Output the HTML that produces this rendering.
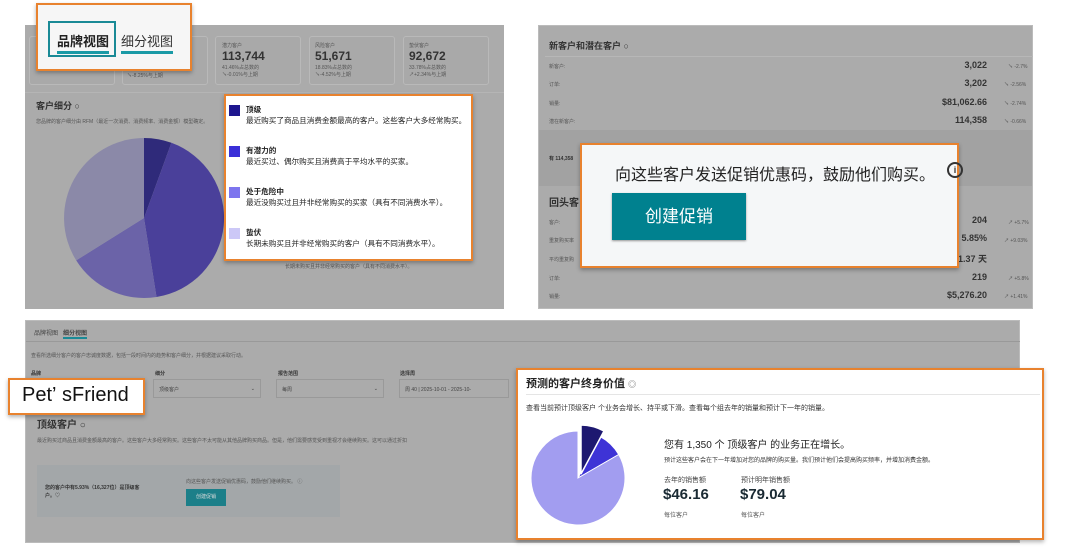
<!DOCTYPE html>
<html><head><meta charset="utf-8"><style>
*{margin:0;padding:0;box-sizing:border-box}
body{width:1080px;height:552px;background:#fff;position:relative;overflow:hidden;font-family:"Liberation Sans","Noto Sans CJK SC",sans-serif;color:#222}
.a{position:absolute;white-space:nowrap}
.g{background:#ababab}
.card{position:absolute;border:1px solid #b9b9b9;border-radius:3px;background:#a9a9a9}
.o{position:absolute;border:2px solid #e8822e;background:#fff;box-shadow:0 2px 4px rgba(0,0,0,.3)}
.s{font-size:5px;color:#555}
.m{color:#333;font-size:9px;font-weight:bold}
</style></head><body>

<!-- Panel 1 -->
<div class="a g" style="left:25px;top:25px;width:479px;height:284px"></div>
<div class="card" style="left:29px;top:36px;width:86px;height:49px"></div>
<div class="card" style="left:122px;top:36px;width:86px;height:49px"></div>
<div class="card" style="left:215px;top:36px;width:86px;height:49px"></div>
<div class="card" style="left:309px;top:36px;width:86px;height:49px"></div>
<div class="card" style="left:403px;top:36px;width:86px;height:49px"></div>
<div class="a s" style="left:222px;top:42px">潜力客户</div>
<div class="a" style="left:222px;top:49px;font-size:12px;font-weight:bold;color:#333">113,744</div>
<div class="a s" style="left:222px;top:64px">41.46%占总数的<br>↘-0.01%与上期</div>
<div class="a s" style="left:315px;top:42px">风险客户</div>
<div class="a" style="left:315px;top:49px;font-size:12px;font-weight:bold;color:#333">51,671</div>
<div class="a s" style="left:315px;top:64px">18.83%占总数的<br>↘-4.52%与上期</div>
<div class="a s" style="left:409px;top:42px">蛰伏客户</div>
<div class="a" style="left:409px;top:49px;font-size:12px;font-weight:bold;color:#333">92,672</div>
<div class="a s" style="left:409px;top:64px">33.78%占总数的<br>↗+2.34%与上期</div>
<div class="a s" style="left:127px;top:72px">↘-8.25%与上期</div>
<div class="a" style="left:25px;top:92px;width:479px;border-top:1px solid #b5b5b5"></div>
<div class="a" style="left:36px;top:99px;font-size:9px;font-weight:bold;color:#333">客户细分 ○</div>
<div class="a s" style="left:36px;top:118px">您品牌的客户细分由 RFM（最近一次消费、消费频率、消费金额）模型确定。</div>
<svg class="a" style="left:0;top:0" width="540" height="310">
<path d="M144 218 L144 138 A80 80 0 0 1 171.4 142.8Z" fill="#2f2a7a"/>
<path d="M144 218 L171.4 142.8 A80 80 0 0 1 156.5 297Z" fill="#4a409a"/>
<path d="M144 218 L156.5 297 A80 80 0 0 1 76.2 260.4Z" fill="#6b63a8"/>
<path d="M144 218 L76.2 260.4 A80 80 0 0 1 144 138Z" fill="#8b89a8"/>
</svg>
<div class="a s" style="left:285px;top:263px">长期未购买且并非经常购买的客户（具有不同消费水平）。</div>

<!-- tab callout -->
<div class="o" style="left:36px;top:3px;width:156px;height:68px;background:#f6f6f6"></div>
<div class="a" style="left:48px;top:21px;width:68px;height:36px;border:2px solid #1a8a96"></div>
<div class="a" style="left:57px;top:31px;font-size:13px;font-weight:bold;color:#222;border-bottom:3px solid #1a9aa6;padding-bottom:1px">品牌视图</div>
<div class="a" style="left:121px;top:31px;font-size:13px;color:#333;border-bottom:3px solid #1a9aa6;padding-bottom:1px">细分视图</div>

<!-- legend callout -->
<div class="o" style="left:224px;top:94px;width:249px;height:167px"></div>
<div class="a" style="left:229px;top:105px;width:11px;height:11px;background:#1e168f"></div>
<div class="a" style="left:229px;top:146px;width:11px;height:11px;background:#3a2fd8"></div>
<div class="a" style="left:229px;top:187px;width:11px;height:11px;background:#7d75ee"></div>
<div class="a" style="left:229px;top:228px;width:11px;height:11px;background:#ccc8f7"></div>
<div class="a" style="left:246px;top:104px;font-size:7.6px;line-height:11px"><b>顶级</b><br>最近购买了商品且消费金额最高的客户。这些客户大多经常购买。</div>
<div class="a" style="left:246px;top:145px;font-size:7.6px;line-height:11px"><b>有潜力的</b><br>最近买过、偶尔购买且消费高于平均水平的买家。</div>
<div class="a" style="left:246px;top:186px;font-size:7.6px;line-height:11px"><b>处于危险中</b><br>最近没购买过且并非经常购买的买家（具有不同消费水平）。</div>
<div class="a" style="left:246px;top:227px;font-size:7.6px;line-height:11px"><b>蛰伏</b><br>长期未购买且并非经常购买的客户（具有不同消费水平）。</div>

<!-- Panel 2 -->
<div class="a g" style="left:538px;top:25px;width:495px;height:284px;border:1px solid #bbb"></div>
<div class="a" style="left:549px;top:39px;font-size:9px;font-weight:bold;color:#333">新客户和潜在客户 ○</div>
<div class="a" style="left:545px;top:56px;width:488px;border-top:1px solid #b7b7b7"></div>
<div class="a s" style="left:549px;top:63px">新客户:</div><div class="a m" style="right:93px;top:60px">3,022</div><div class="a s" style="left:1008px;top:63px">↘ -2.7%</div>
<div class="a s" style="left:549px;top:81px">订单:</div><div class="a m" style="right:93px;top:78px">3,202</div><div class="a s" style="left:1004px;top:81px">↘ -2.56%</div>
<div class="a s" style="left:549px;top:100px">销量:</div><div class="a m" style="right:93px;top:97px">$81,062.66</div><div class="a s" style="left:1004px;top:100px">↘ -2.74%</div>
<div class="a s" style="left:549px;top:118px">潜在新客户:</div><div class="a m" style="right:93px;top:115px">114,358</div><div class="a s" style="left:1004px;top:118px">↘ -0.66%</div>
<div class="a" style="left:539px;top:130px;width:493px;height:56px;background:#a2a2a2"></div>
<div class="a" style="left:549px;top:155px;font-size:5px;font-weight:bold;color:#333">有 114,358</div>
<div class="a" style="left:549px;top:194px;font-size:10px;font-weight:bold;color:#333">回头客</div>
<div class="a s" style="left:549px;top:219px">客户:</div><div class="a m" style="right:93px;top:215px">204</div><div class="a s" style="left:1008px;top:219px">↗ +5.7%</div>
<div class="a s" style="left:549px;top:237px">重复购买率</div><div class="a m" style="right:93px;top:233px">5.85%</div><div class="a s" style="left:1004px;top:237px">↗ +9.03%</div>
<div class="a s" style="left:549px;top:256px">平均重复购</div><div class="a m" style="right:93px;top:252px">1.37 天</div>
<div class="a s" style="left:549px;top:275px">订单:</div><div class="a m" style="right:93px;top:272px">219</div><div class="a s" style="left:1008px;top:275px">↗ +5.8%</div>
<div class="a s" style="left:549px;top:293px">销量:</div><div class="a m" style="right:93px;top:290px">$5,276.20</div><div class="a s" style="left:1004px;top:293px">↗ +1.41%</div>

<div class="o" style="left:580px;top:143px;width:379px;height:125px;background:#f5f7f8"></div>
<div class="a" style="left:615px;top:161px;font-size:16px;color:#222">向这些客户发送促销优惠码，鼓励他们购买。</div>
<div class="a" style="left:947px;top:162px;width:16px;height:16px;border:2px solid #333;border-radius:50%;font-size:9px;font-weight:bold;text-align:center;line-height:12px;color:#333">i</div>
<div class="a" style="left:612px;top:193px;width:134px;height:47px;background:#00818f;box-shadow:0 1px 2px rgba(0,0,0,.4);color:#fff;font-size:17px;text-align:center;line-height:47px">创建促销</div>

<!-- Panel 3 -->
<div class="a g" style="left:25px;top:320px;width:995px;height:223px;border:1px solid #bbb"></div>
<div class="a" style="left:34px;top:328px;font-size:6px;color:#444">品牌视图 &nbsp;&nbsp;<span style="border-bottom:2px solid #1a8a96;font-weight:bold">细分视图</span></div>
<div class="a" style="left:26px;top:341px;width:994px;border-top:1px solid #999"></div>
<div class="a s" style="left:31px;top:352px">查看所选细分客户的客户忠诚度数据，包括一段时间内的趋势和客户细分，并根据建议采取行动。</div>
<div class="a" style="left:31px;top:370px;font-size:5px;font-weight:bold;color:#333">品牌</div>
<div class="a" style="left:155px;top:370px;font-size:5px;font-weight:bold;color:#333">细分</div>
<div class="a" style="left:278px;top:370px;font-size:5px;font-weight:bold;color:#333">报告范围</div>
<div class="a" style="left:400px;top:370px;font-size:5px;font-weight:bold;color:#333">选择周</div>
<div class="a" style="left:153px;top:379px;width:108px;height:19px;border:1px solid #999;font-size:5px;color:#444;padding:6px 5px">顶级客户<span style="float:right">⌄</span></div>
<div class="a" style="left:276px;top:379px;width:108px;height:19px;border:1px solid #999;font-size:5px;color:#444;padding:6px 5px">每周<span style="float:right">⌄</span></div>
<div class="a" style="left:399px;top:379px;width:110px;height:19px;border:1px solid #999;font-size:5px;color:#444;padding:6px 5px">周 40 | 2025-10-01 - 2025-10-</div>
<div class="a" style="left:37px;top:416px;font-size:10px;font-weight:bold;color:#333">顶级客户 ○</div>
<div class="a s" style="left:37px;top:437px">最近购买过商品且消费金额最高的客户。这些客户大多经常购买。这些客户不太可能从其他品牌购买商品。但是，他们需要感觉受到重视才会继续购买。这可以通过折扣</div>
<div class="a" style="left:37px;top:465px;width:303px;height:52px;background:#a3a7a9"></div>
<div class="a" style="left:45px;top:484px;font-size:5px;font-weight:bold;color:#333;line-height:8px">您的客户中有5.93%（16,327位）是顶级客<br>户。♡</div>
<div class="a s" style="left:186px;top:478px">向这些客户发送促销优惠码，鼓励他们继续购买。 ⓘ</div>
<div class="a" style="left:186px;top:489px;width:40px;height:17px;background:#1c7f89;font-size:5px;color:#ddd;text-align:center;line-height:17px">创建促销</div>

<div class="o" style="left:8px;top:378px;width:137px;height:37px;border-width:2px"></div>
<div class="a" style="left:22px;top:384px;font-size:20px;color:#111">Pet’&nbsp;sFriend</div>

<div class="o" style="left:516px;top:368px;width:528px;height:172px"></div>
<div class="a" style="left:526px;top:375px;font-size:11px;font-weight:bold;color:#222">预测的客户终身价值 <span style="font-weight:normal;color:#666;font-size:8px">◎</span></div>
<div class="a" style="left:526px;top:394px;width:514px;border-top:1px solid #e5e5e5"></div>
<div class="a" style="left:526px;top:403px;font-size:7px;color:#333">查看当前预计顶级客户 个业务会增长、持平或下滑。查看每个组去年的销量和预计下一年的销量。</div>
<svg class="a" style="left:516px;top:410px" width="130" height="130">
<path d="M62 68 L84.1 26.5 A47 47 0 0 1 102.7 44.5Z" fill="#3e33d6" stroke="#fff" stroke-width="1"/>
<path d="M62 68 L102.7 44.5 A47 47 0 1 1 62 21Z" fill="#a29df0" stroke="#fff" stroke-width="1"/>
<path d="M65 64 L65 15 A49 49 0 0 1 88 21Z" fill="#1d1870" stroke="#fff" stroke-width="1.5"/>
</svg>
<div class="a" style="left:664px;top:436px;font-size:10px;color:#222">您有 1,350 个 顶级客户 的业务正在增长。</div>
<div class="a" style="left:664px;top:455px;font-size:6px;color:#333">预计这些客户会在下一年增加对您的品牌的购买量。我们预计他们会提高购买频率，并增加消费金额。</div>
<div class="a" style="left:664px;top:475px;font-size:7px;color:#444">去年的销售额</div>
<div class="a" style="left:741px;top:475px;font-size:7px;color:#444">预计明年销售额</div>
<div class="a" style="left:663px;top:486px;font-size:15px;font-weight:bold;color:#1a2a33">$46.16</div>
<div class="a" style="left:740px;top:486px;font-size:15px;font-weight:bold;color:#1a2a33">$79.04</div>
<div class="a" style="left:664px;top:510px;font-size:6px;color:#555">每位客户</div>
<div class="a" style="left:741px;top:510px;font-size:6px;color:#555">每位客户</div>
</body></html>
